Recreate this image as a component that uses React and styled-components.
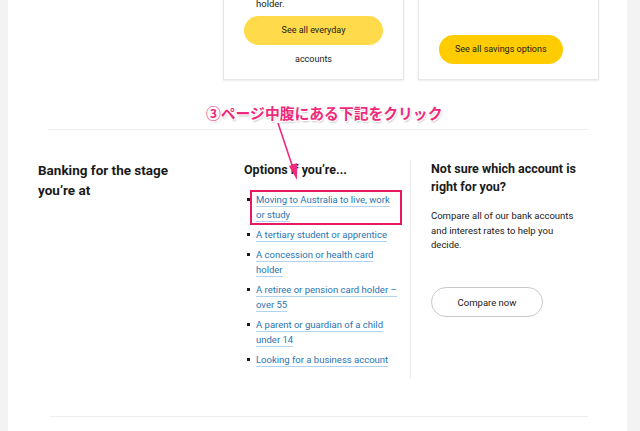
import React from "react";
import styled, { createGlobalStyle } from "styled-components";

const Global = createGlobalStyle`
  html, body { margin: 0; padding: 0; background: #f3f3f3; }
  body { font-family: Roboto, "Noto Sans CJK JP", sans-serif; color: #1a1a1a; }
`;

const Panel = styled.div`
  position: relative;
  margin-left: 8px;
  width: 619px;
  min-height: 431px;
  background: #fff;
  overflow: hidden;
`;

const CardsRow = styled.div`
  display: flex;
  gap: 14px;
  margin-top: -25px;
  padding-left: 215px;
`;

const Card = styled.div`
  width: 181px;
  min-height: 105px;
  box-sizing: border-box;
  border: 1px solid #e6e6e6;
  box-shadow: 0 1px 2px rgba(0, 0, 0, 0.08);
  padding: 20px 20px 15px;
  display: flex;
  flex-direction: column;
  align-items: flex-start;
`;

const CardText = styled.p`
  margin: 0 0 5px 12px;
  font-size: 9.5px;
  line-height: 15px;
  color: #1a1a1a;
`;

const YellowButton = styled.button`
  border: none;
  border-radius: 15px;
  height: 29px;
  line-height: 29px;
  font-family: inherit;
  font-size: 9px;
  color: #1a1a1a;
  background: ${(p) => p.$bg};
  width: ${(p) => (p.$full ? "100%" : "auto")};
  padding: ${(p) => (p.$full ? "0 30px" : "0 16px")};
  margin-top: ${(p) => (p.$bottom ? "auto" : "0")};
  white-space: ${(p) => (p.$full ? "normal" : "nowrap")};
  text-align: center;
  overflow: visible;
  cursor: pointer;
`;

const Divider = styled.hr`
  border: none;
  height: 1px;
  background: #ededed;
  margin: ${(p) => p.$m};
`;

const Section = styled.div`
  display: flex;
  margin-top: 30px;
  padding-left: 30px;
`;

const LeftCol = styled.div`
  width: 206px;
`;

const MidCol = styled.div`
  width: 155px;
  padding-right: 11px;
  border-right: 1px solid #ececec;
  padding-bottom: 12px;
`;

const RightCol = styled.div`
  padding-left: 20px;
  width: 150px;
`;

const BigHeading = styled.h2`
  margin: 0;
  font-size: 13.5px;
  line-height: 20px;
  font-weight: 700;
  color: #1a1a1a;
`;

const SubHeading = styled.h3`
  margin: 0;
  font-size: 12.5px;
  line-height: ${(p) => p.$lh || "20px"};
  font-weight: 700;
  color: #1a1a1a;
`;

const List = styled.ul`
  list-style: none;
  margin: 12px 0 0;
  padding: 0;
  display: flex;
  flex-direction: column;
  gap: 5px;
`;

const Item = styled.li`
  position: relative;
  padding-left: 12px;
  font-size: 9.5px;
  line-height: 15px;
  &::before {
    content: "";
    position: absolute;
    left: 3px;
    top: 6px;
    width: 3px;
    height: 3px;
    background: #1a1a1a;
  }
`;

const Link = styled.a`
  color: #2a74b4;
  text-decoration: none;
  border-bottom: 1px solid #b3d2ec;
  padding-bottom: 1px;
`;

const Para = styled.p`
  margin: 13px 0 0;
  font-size: 9.5px;
  line-height: 14.7px;
  color: #1a1a1a;
`;

const OutlineButton = styled.button`
  margin-top: 34px;
  width: 112px;
  height: 30px;
  border-radius: 15px;
  border: 1px solid #c8c8c8;
  background: #fff;
  font-family: inherit;
  font-size: 9.5px;
  color: #1a1a1a;
`;

const Annotation = styled.div`
  position: absolute;
  left: 198px;
  top: 102px;
  font-size: 14.8px;
  font-weight: 700;
  color: #ee2a7b;
  white-space: nowrap;
  font-family: "Noto Sans CJK JP", sans-serif;
  text-shadow: -1px -1px 0 #fff, 1px -1px 0 #fff, -1px 1px 0 #fff, 1px 1px 0 #fff,
    1px 2px 2px rgba(0, 0, 0, 0.25);
`;

const ArrowSvg = styled.svg`
  position: absolute;
  left: 258px;
  top: 118px;
`;

const Highlight = styled.div`
  position: absolute;
  left: 242px;
  top: 190px;
  width: 152px;
  height: 35px;
  box-sizing: border-box;
  border: 2px solid #e8195f;
`;

const links = [
  "Moving to Australia to live, work or study",
  "A tertiary student or apprentice",
  "A concession or health card holder",
  "A retiree or pension card holder – over 55",
  "A parent or guardian of a child under 14",
  "Looking for a business account",
];

export default function App() {
  return (
    <>
      <Global />
      <Panel>
        <CardsRow>
          <Card>
            <CardText>holder.</CardText>
            <YellowButton $bg="#ffda4a" $full>
              See all everyday accounts
            </YellowButton>
          </Card>
          <Card>
            <YellowButton $bg="#ffcc00" $bottom>
              See all savings options
            </YellowButton>
          </Card>
        </CardsRow>
        <Divider $m="49px 39px 0 40px" />
        <Section>
          <LeftCol>
            <BigHeading>
              Banking for the stage
              <br />
              you’re at
            </BigHeading>
          </LeftCol>
          <MidCol>
            <SubHeading>Options if you’re...</SubHeading>
            <List>
              {links.map((t) => (
                <Item key={t}>
                  <Link href="#">{t}</Link>
                </Item>
              ))}
            </List>
          </MidCol>
          <RightCol>
            <SubHeading $lh="18px">Not sure which account is right for you?</SubHeading>
            <Para>Compare all of our bank accounts and interest rates to help you decide.</Para>
            <OutlineButton>Compare now</OutlineButton>
          </RightCol>
        </Section>
        <Divider $m="37px 39px 0 41px" />
        <Annotation>③ページ中腹にある下記をクリック</Annotation>
        <ArrowSvg width="40" height="70" viewBox="0 0 40 70">
          <line x1="12" y1="5" x2="27" y2="50" stroke="#ee2a7b" strokeWidth="1.6" />
          <polygon points="23,48 31,45 31,62" fill="#ee2a7b" />
        </ArrowSvg>
        <Highlight />
      </Panel>
    </>
  );
}
